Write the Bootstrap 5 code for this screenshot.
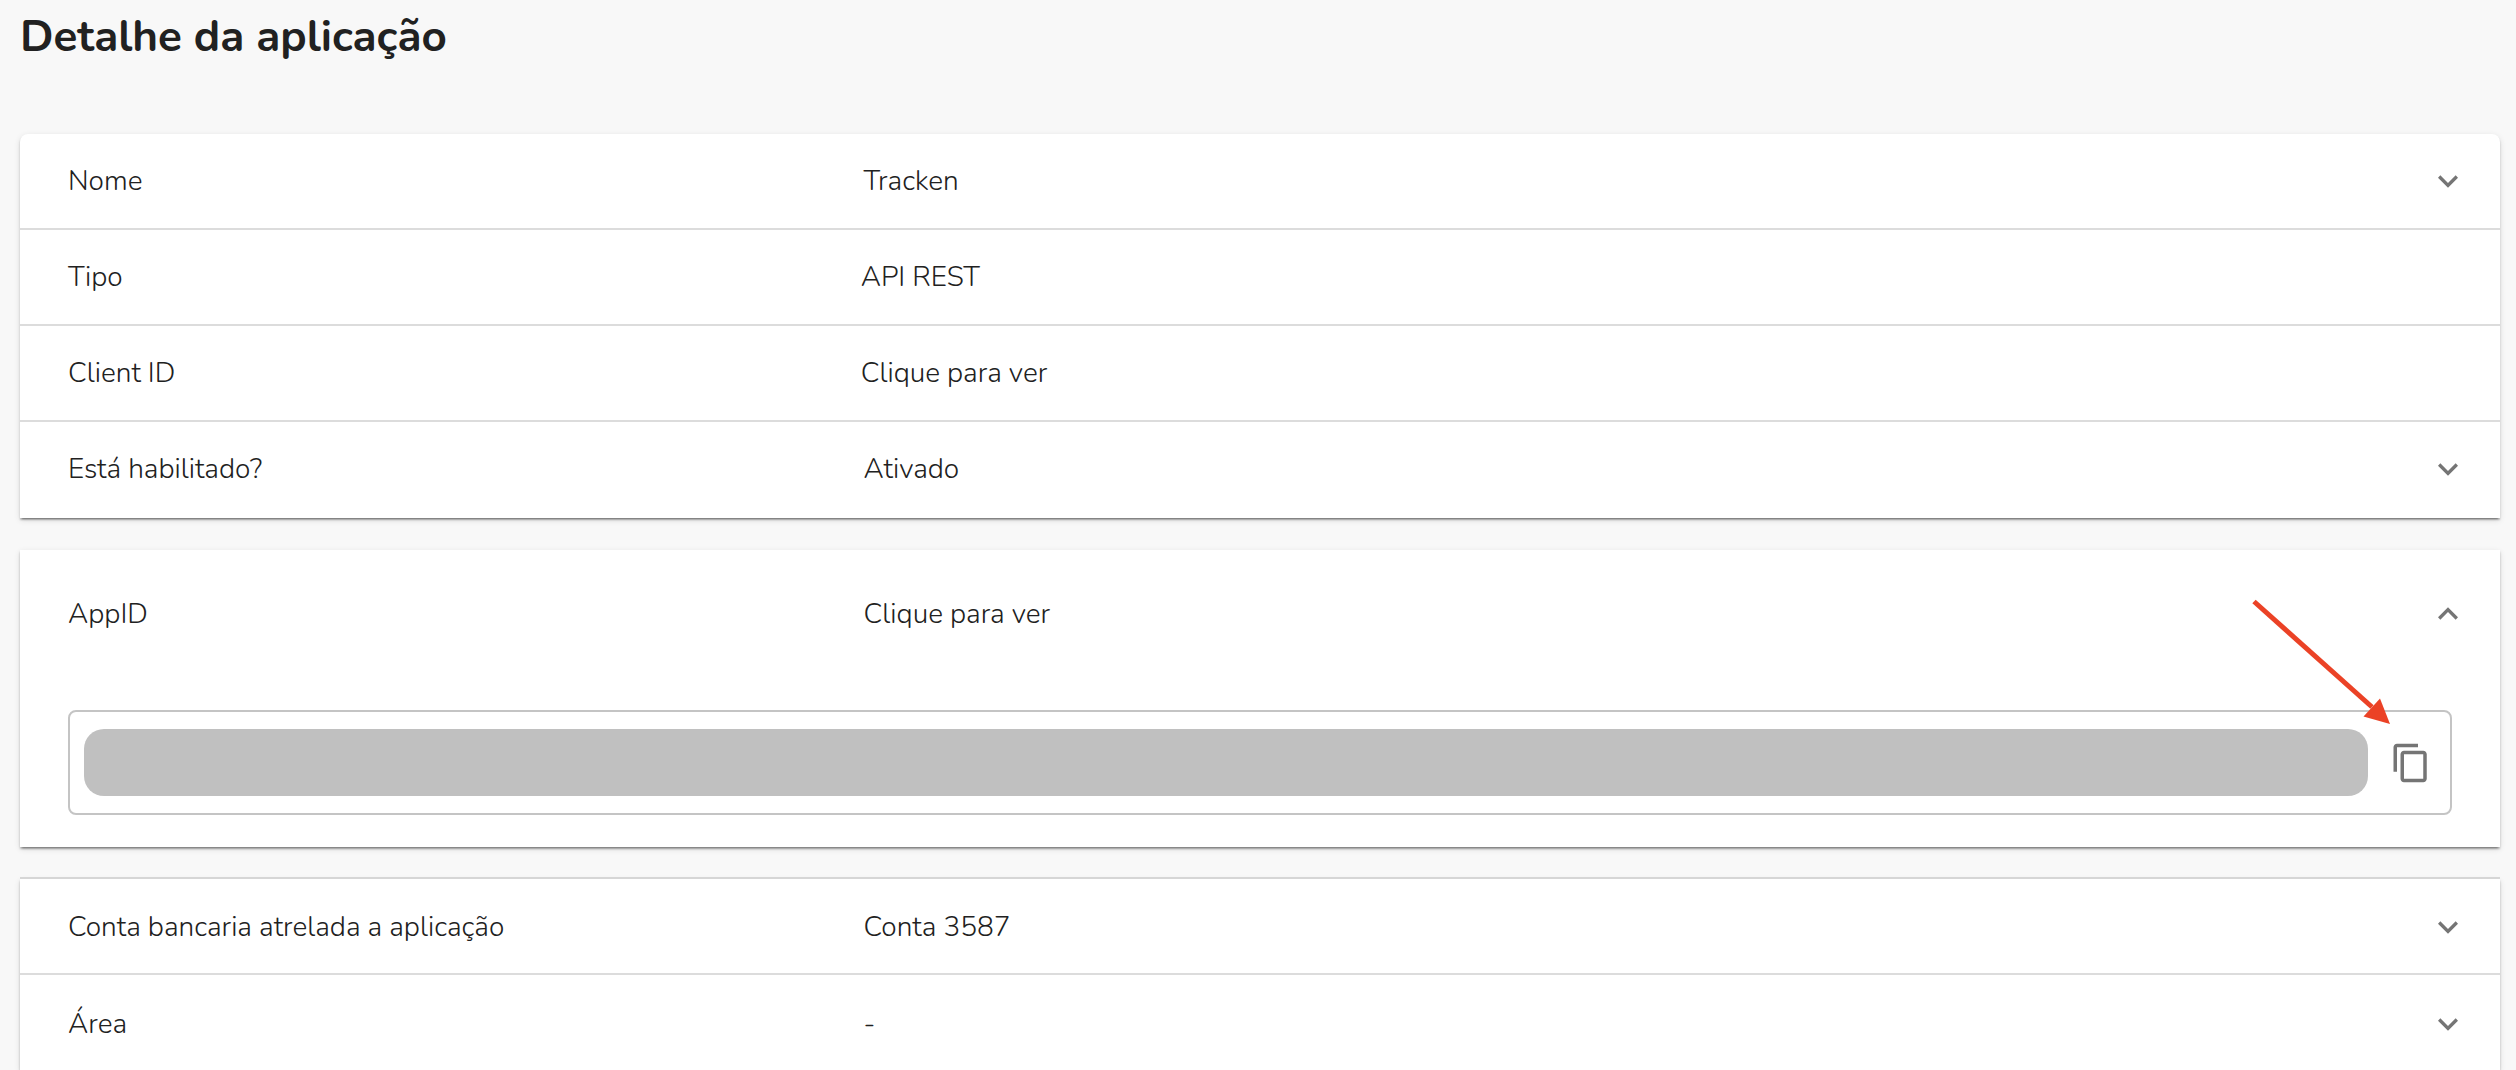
<!DOCTYPE html>
<html lang="pt-BR">
<head>
<meta charset="utf-8">
<meta name="viewport" content="width=device-width, initial-scale=1">
<title>Detalhe da aplicação</title>
<link href="https://cdn.jsdelivr.net/npm/bootstrap@5.3.0/dist/css/bootstrap.min.css" rel="stylesheet">
<style>
body { background: #f8f8f8; color: #212121; font-family: Nunito, Lato, "Open Sans", sans-serif; font-size: 28px; font-weight: 350; line-height: 40px; }
.app-page { padding: 0 16px 0 20px; }
.app-title { font-size: 44px; line-height: 54px; padding-top: 10px; margin-bottom: 70px; }
.panel-stack { display: flex; flex-direction: column; gap: 32px; }
.panel { position: relative; background: #fff; box-shadow: 0 3px 2px -2px rgba(0,0,0,.36), 0 2px 2px rgba(0,0,0,.22), 0 2px 6px rgba(0,0,0,.12); }
.panel:first-child { border-radius: 8px 8px 0 0; }
.panel-ruled::before { content: ""; position: absolute; inset: -2px 0 auto; height: 2px; background: #d6d6d6; }
.detail { display: flex; align-items: center; width: 100%; min-height: 96px; padding: 0 48px; border: 0; border-bottom: 2px solid #dcdcdc; background: none; color: inherit; font-weight: inherit; text-align: left; }
.detail:last-child { border-bottom-color: transparent; }
.panel-ruled .detail { padding-top: 2px; }
.panel-ruled .detail:last-child { border-bottom: 0; min-height: 95px; }
.detail.is-open { min-height: 128px; border-bottom: 0; }
.detail-label { flex: 0 0 33.25%; }
button.detail { padding-right: 32px; }
button.detail .detail-label { flex-basis: 33.15%; }
.chevron { width: 40px; height: 40px; fill: #757575; flex: none; }
.is-open .chevron { transform: rotate(180deg); }
.secret-body { padding: 32px 48px; }
.secret-box { position: relative; display: flex; align-items: center; border: 2px solid #c4c4c4; border-radius: 8px; padding: 17px 18px 17px 14px; gap: 22px; }
.secret-value { flex: 1; min-width: 0; height: 67px; border: 0; border-radius: 20px; background: #c0c0c0; }
.copy-btn { border: 0; padding: 0; background: none; line-height: 0; }
.copy-btn svg { width: 42px; height: 42px; fill: #757575; }
.pointer-arrow { position: absolute; right: 58px; top: -114px; width: 142px; height: 128px; pointer-events: none; }
</style>
<script src="https://cdn.jsdelivr.net/npm/bootstrap@5.3.0/dist/js/bootstrap.bundle.min.js"></script>
</head>
<body>
<svg class="d-none" aria-hidden="true"><symbol id="chev" viewBox="0 0 24 24"><path d="M16.59 8.59 12 13.17 7.41 8.59 6 10l6 6 6-6z"/></symbol></svg>
<main class="app-page">
  <h1 class="app-title fw-bold">Detalhe da aplicação</h1>
  <div class="panel-stack">
    <section class="panel">
      <button type="button" class="detail"><span class="detail-label">Nome</span><span class="flex-grow-1">Tracken</span><svg class="chevron"><use href="#chev"/></svg></button>
      <div class="detail"><span class="detail-label">Tipo</span><span class="flex-grow-1">API REST</span></div>
      <div class="detail"><span class="detail-label">Client ID</span><span class="flex-grow-1">Clique para ver</span></div>
      <button type="button" class="detail"><span class="detail-label">Está habilitado?</span><span class="flex-grow-1">Ativado</span><svg class="chevron"><use href="#chev"/></svg></button>
    </section>
    <section class="panel">
      <button type="button" class="detail is-open" aria-expanded="true" aria-controls="appid-body"><span class="detail-label">AppID</span><span class="flex-grow-1">Clique para ver</span><svg class="chevron"><use href="#chev"/></svg></button>
      <div class="secret-body" id="appid-body">
        <div class="secret-box">
          <input class="secret-value" type="text" readonly aria-label="AppID">
          <button type="button" class="copy-btn" aria-label="Copiar AppID"><svg viewBox="0 0 24 24"><path d="M16 1H4c-1.1 0-2 .9-2 2v14h2V3h12V1zm3 4H8c-1.1 0-2 .9-2 2v14c0 1.1.9 2 2 2h11c1.1 0 2-.9 2-2V7c0-1.1-.9-2-2-2zm0 16H8V7h11v14z"/></svg></button>
          <svg class="pointer-arrow" viewBox="0 0 142 128" aria-hidden="true"><path d="M4 3.500 122 109" stroke="#eb4226" stroke-width="5"/><path d="M140 126 130 100.500 113.500 118.500z" fill="#eb4226"/></svg>
        </div>
      </div>
    </section>
    <section class="panel panel-ruled">
      <button type="button" class="detail"><span class="detail-label">Conta bancaria atrelada a aplicação</span><span class="flex-grow-1">Conta 3587</span><svg class="chevron"><use href="#chev"/></svg></button>
      <button type="button" class="detail"><span class="detail-label">Área</span><span class="flex-grow-1">-</span><svg class="chevron"><use href="#chev"/></svg></button>
    </section>
  </div>
</main>
</body>
</html>
